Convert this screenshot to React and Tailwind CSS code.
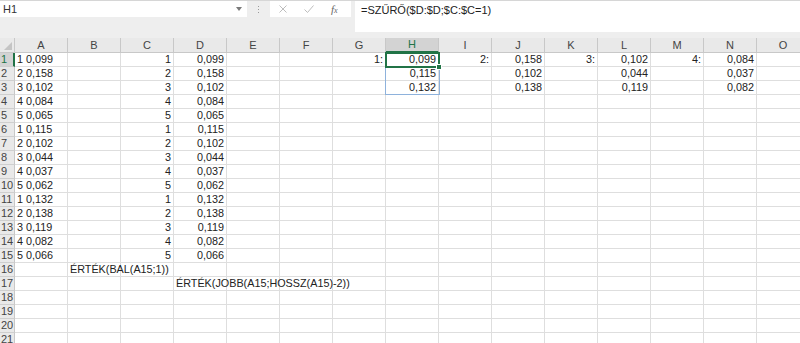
import React from 'react';

const COLS = ['A', 'B', 'C', 'D', 'E', 'F', 'G', 'H', 'I', 'J', 'K', 'L', 'M', 'N', 'O'];
const VALS = ['0,099', '0,158', '0,102', '0,084', '0,065', '0,115', '0,102', '0,044', '0,037', '0,062', '0,132', '0,138', '0,119', '0,082', '0,066'];

const extra = {
  1: { G: '1:', H: '0,099', I: '2:', J: '0,158', K: '3:', L: '0,102', M: '4:', N: '0,084' },
  2: { H: '0,115', J: '0,102', L: '0,044', N: '0,037' },
  3: { H: '0,132', J: '0,138', L: '0,119', N: '0,082' },
};

function cellsFor(r) {
  const c = {};
  if (r <= 15) {
    const n = ((r - 1) % 5) + 1;
    c.A = { v: `${n} ${VALS[r - 1]}`, left: true };
    c.C = { v: String(n) };
    c.D = { v: VALS[r - 1] };
  }
  Object.entries(extra[r] || {}).forEach(([k, v]) => (c[k] = { v }));
  if (r === 16) c.B = { v: 'ÉRTÉK(BAL(A15;1))', left: true };
  if (r === 17) c.D = { v: 'ÉRTÉK(JOBB(A15;HOSSZ(A15)-2))', left: true };
  return c;
}

function Toolbar() {
  return (
    <div className="h-[38px] bg-[#eeeeee] border-t border-[#d6d6d6] flex items-start">
      <div className="w-[247px] h-[16px] bg-white flex items-center justify-between pl-[3px] pr-[5px]">
        <span className="text-[11px] text-[#333]">H1</span>
        <svg width="6" height="4" viewBox="0 0 6 4"><path d="M0 0h6L3 4z" fill="#7a7a7a" /></svg>
      </div>
      <div className="w-[23px] h-[16px] flex flex-col items-center justify-center gap-[2px]">
        <span className="w-[1px] h-[1px] bg-[#9a9a9a]" />
        <span className="w-[1px] h-[1px] bg-[#9a9a9a]" />
        <span className="w-[1px] h-[1px] bg-[#9a9a9a]" />
      </div>
      <div className="w-[81px] h-[16px] bg-white flex items-center pl-[9px] gap-[17px]">
        <svg width="8" height="8" viewBox="0 0 8 8"><path d="M0.5 0.5l7 7M7.5 0.5l-7 7" stroke="#bdbdbd" strokeWidth="1" /></svg>
        <svg width="10" height="8" viewBox="0 0 10 8"><path d="M0.5 4.5l3 3 6-7" stroke="#bdbdbd" strokeWidth="1" fill="none" /></svg>
        <span className="text-[11px] italic text-[#666] leading-none" style={{ fontFamily: '"Liberation Serif", serif' }}>
          f<span className="text-[8px]">x</span>
        </span>
      </div>
      <div className="ml-[4px] flex-1 h-[31px] bg-white pl-[6px] pt-[2px] text-[11px] leading-[14px] text-[#222]">
        =SZŰRŐ($D:$D;$C:$C=1)
      </div>
    </div>
  );
}

function HeaderRow() {
  return (
    <div className="flex h-[15px]">
      <div className="w-[15px] shrink-0 bg-[#e9e9e9] border-r border-b border-[#c8c8c8] flex items-end justify-end pr-[2px] pb-[2px]">
        <svg width="8" height="8" viewBox="0 0 8 8"><path d="M8 0v8H0z" fill="#c4c4c4" /></svg>
      </div>
      {COLS.map((c) => (
        <div
          key={c}
          className={`w-[53px] shrink-0 border-r flex items-center justify-center text-[11px] ${
            c === 'H'
              ? 'bg-[#d3d3d3] text-[#217346] border-b-2 border-b-[#217346] border-r-[#c8c8c8]'
              : 'bg-[#e9e9e9] text-[#444] border-b border-[#c8c8c8]'
          }`}
        >
          {c}
        </div>
      ))}
    </div>
  );
}

function Row({ r }) {
  const cells = cellsFor(r);
  return (
    <div className="flex h-[14px]">
      <div
        className={`w-[15px] shrink-0 border-b border-[#cfcfcf] text-[11px] leading-[13px] pl-[1px] ${
          r === 1 ? 'bg-[#d3d3d3] text-[#217346] border-r-2 border-r-[#217346]' : 'bg-[#e9e9e9] text-[#444] border-r border-r-[#c8c8c8]'
        }`}
      >
        {r}
      </div>
      {COLS.map((c) => {
        const cell = cells[c];
        return (
          <div key={c} className="w-[53px] shrink-0 border-r border-b border-[#dedede] relative">
            {cell && (
              <div
                className={`absolute top-0 h-[13px] flex items-center whitespace-nowrap text-[10.8px] text-[#222] z-10 ${
                  cell.left ? 'left-[1px] pl-[1px]' : 'right-[1px] pr-[1px]'
                }`}
              >
                {cell.v}
              </div>
            )}
          </div>
        );
      })}
    </div>
  );
}

export default function App() {
  const rows = Array.from({ length: 21 }, (_, i) => i + 1);
  return (
    <div className="w-[800px] h-[343px] overflow-hidden bg-white" style={{ fontFamily: '"Liberation Sans", Arial, sans-serif' }}>
      <Toolbar />
      <div className="relative">
        <HeaderRow />
        {rows.map((r) => (
          <Row key={r} r={r} />
        ))}
        {/* spill range H1:H3 */}
        <div className="absolute left-[385px] top-[14px] w-[55px] h-[43px] border border-[#8eb2dc] z-20 pointer-events-none" />
        {/* active cell H1 */}
        <div className="absolute left-[385px] top-[14px] w-[55px] h-[16px] border-2 border-[#217346] z-30 pointer-events-none">
          <div className="absolute -right-[4px] -bottom-[4px] w-[6px] h-[6px] bg-[#217346] border border-white" />
        </div>
      </div>
    </div>
  );
}
